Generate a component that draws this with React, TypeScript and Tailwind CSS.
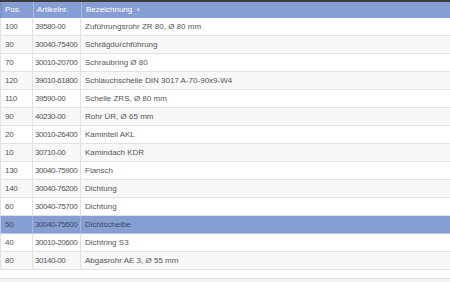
import React from "react";

const rows: [string, string, string][] = [
  ["100", "39580-00", "Zuführungsrohr ZR 80, Ø 80 mm"],
  ["30", "30040-75400", "Schrägdurchführung"],
  ["70", "30010-20700", "Schraubring Ø 80"],
  ["120", "39010-61800", "Schlauchschelle DIN 3017 A-70-90x9-W4"],
  ["110", "39590-00", "Schelle ZRS, Ø 80 mm"],
  ["90", "40230-00", "Rohr ÜR, Ø 65 mm"],
  ["20", "30010-26400", "Kaminteil AKL"],
  ["10", "30710-00", "Kamindach KDR"],
  ["130", "30040-75900", "Flansch"],
  ["140", "30040-76200", "Dichtung"],
  ["60", "30040-75700", "Dichtung"],
  ["50", "30040-75600", "Dichtscheibe"],
  ["40", "30010-20600", "Dichtring S3"],
  ["80", "30140-00", "Abgasrohr AE 3, Ø 55 mm"],
];

export default function App() {
  return (
    <div
      className="w-[450px] h-[282px] overflow-hidden bg-white flex flex-col"
      style={{ fontFamily: '"Liberation Sans", Arial, sans-serif' }}
    >
      <div className="h-[2px] bg-[#3c3c3c]" />
      <div className="grid grid-cols-[32px_48px_1fr] h-[16px] bg-[#869ed3] text-white text-[8px] leading-[16px] border-l-2 border-[#7a93c9]">
        <div className="pl-[3px] border-r border-[#a9b9e0]">Pos.</div>
        <div className="pl-[3px] border-r border-[#a9b9e0] whitespace-nowrap">Artikelnr.</div>
        <div className="pl-[4px] flex items-center gap-[3px]">
          Bezeichnung
          <span className="text-[#c9d4ef] text-[6px]">▼</span>
        </div>
      </div>
      {rows.map((r, i) => {
        const sel = r[0] === "50";
        const bg = sel ? "bg-[#869ed1]" : i % 2 === 0 ? "bg-white" : "bg-[#f8f8f8]";
        return (
          <div
            key={i}
            className={`grid grid-cols-[32px_48px_1fr] h-[18px] text-[8px] leading-[17px] border-b border-l ${bg} ${
              sel ? "border-[#b7c5e6] text-[#3f4a66]" : "border-[#e2e2e2] text-[#555]"
            }`}
          >
            <div className={`pl-[4px] tracking-[-0.3px] border-r ${sel ? "border-[#a3b4de]" : "border-[#e2e2e2]"}`}>{r[0]}</div>
            <div className={`pl-[2px] tracking-[-0.45px] whitespace-nowrap overflow-hidden border-r ${sel ? "border-[#a3b4de]" : "border-[#e2e2e2]"}`}>{r[1]}</div>
            <div className="pl-[4px] whitespace-nowrap">{r[2]}</div>
          </div>
        );
      })}
      <div className="h-[9px] bg-white border-b border-[#dcdcdc]" />
      <div className="flex-1 bg-[#f2f2f2]" />
    </div>
  );
}
